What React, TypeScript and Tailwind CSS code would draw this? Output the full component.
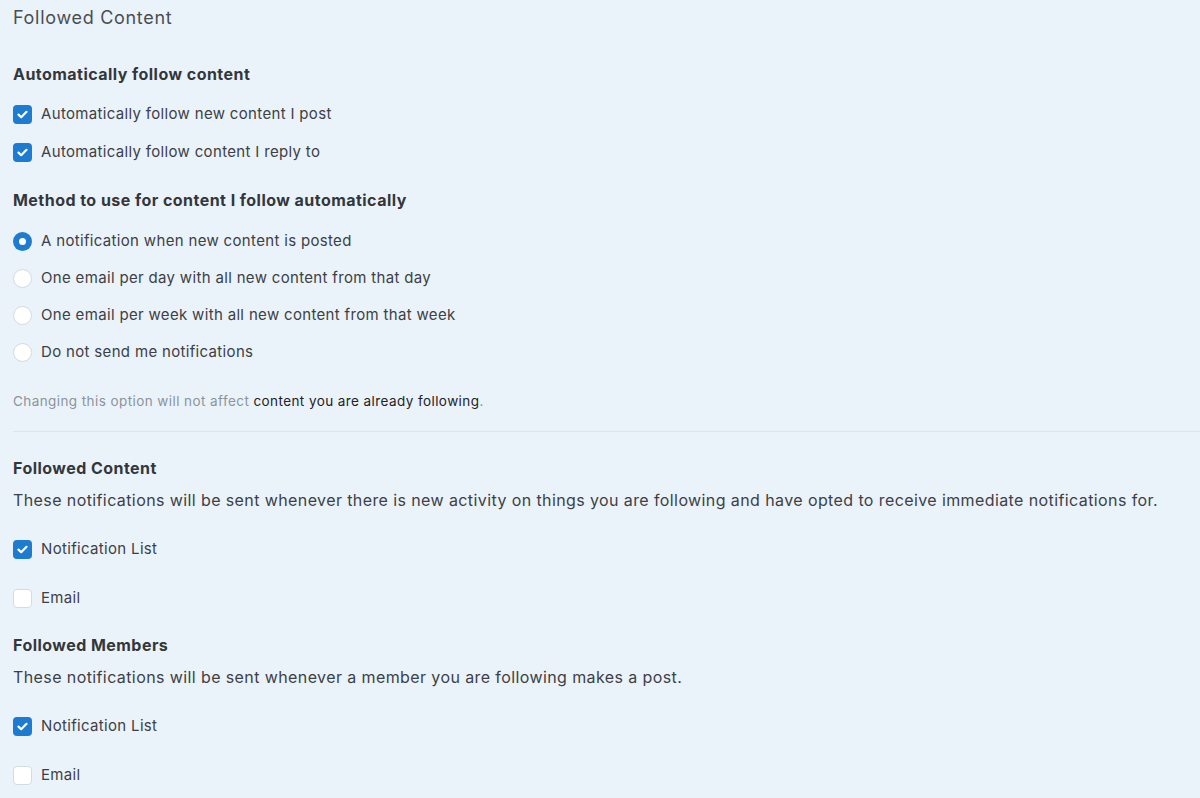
import React from "react";

// 通知設定ページ（フォロー中コンテンツ）
const Check = ({ checked }: { checked: boolean }) =>
  checked ? (
    <span className="flex h-[19px] w-[19px] shrink-0 items-center justify-center rounded-[4px] bg-[#1d7bd0]">
      <svg width="11" height="9" viewBox="0 0 11 9" fill="none">
        <path d="M1.5 4.6 4.2 7.2 9.5 1.8" stroke="#fff" strokeWidth="2.2" strokeLinecap="round" strokeLinejoin="round" />
      </svg>
    </span>
  ) : (
    <span className="h-[19px] w-[19px] shrink-0 rounded-[4px] border border-[#d3dbe3] bg-white" />
  );

const Radio = ({ checked }: { checked: boolean }) =>
  checked ? (
    <span className="flex h-[19px] w-[19px] shrink-0 items-center justify-center rounded-full bg-[#1d7bd0]">
      <span className="h-[7px] w-[7px] rounded-full bg-white" />
    </span>
  ) : (
    <span className="h-[19px] w-[19px] shrink-0 rounded-full border border-[#d3dbe3] bg-white" />
  );

const Row = ({ h, children, label }: { h: string; children: React.ReactNode; label: string }) => (
  <div className={`flex items-center gap-[9px] ${h}`}>
    {children}
    <span className="text-[15px] tracking-[0.33px] text-[#3d4046]">{label}</span>
  </div>
);

export default function App() {
  return (
    <div
      className="min-h-[798px] w-[1200px] bg-[#eaf3f9] pl-[13px] text-[#3b3e44]"
      style={{ fontFamily: "Inter, 'Noto Sans', sans-serif" }}
    >
      <div className="pt-[4px] text-[18px] leading-7 tracking-[0.7px] text-[#4a4d53]">Followed Content</div>

      <div className="mt-[30px] text-[16px] font-bold leading-6 tracking-[0.46px] text-[#33363b]">Automatically follow content</div>
      <div className="mt-[9px]">
        <Row h="h-[38px]" label="Automatically follow new content I post"><Check checked /></Row>
        <Row h="h-[38px]" label="Automatically follow content I reply to"><Check checked /></Row>
      </div>

      <div className="mt-[17px] text-[16px] font-bold leading-6 tracking-[0.46px] text-[#33363b]">Method to use for content I follow automatically</div>
      <div className="mt-[11px]">
        <Row h="h-[37px]" label="A notification when new content is posted"><Radio checked /></Row>
        <Row h="h-[37px]" label="One email per day with all new content from that day"><Radio checked={false} /></Row>
        <Row h="h-[37px]" label="One email per week with all new content from that week"><Radio checked={false} /></Row>
        <Row h="h-[37px]" label="Do not send me notifications"><Radio checked={false} /></Row>
      </div>

      <div className="mt-[20px] text-[13.5px] leading-5 tracking-[0.42px] text-[#8c939c]">
        Changing this option will not affect <span className="text-[#1f2227]">content you are already following</span>.
      </div>

      <div className="mt-[20px] h-px bg-[#dde5ec]" />

      <div className="mt-[24px] text-[16px] font-bold leading-6 tracking-[0.46px] text-[#33363b]">Followed Content</div>
      <div className="mt-[8px] text-[16px] leading-6 tracking-[0.4px] text-[#3d4046]">
        These notifications will be sent whenever there is new activity on things you are following and have opted to receive immediate notifications for.
      </div>
      <div className="mt-[13px]">
        <Row h="h-[49px]" label="Notification List"><Check checked /></Row>
        <Row h="h-[49px]" label="Email"><Check checked={false} /></Row>
      </div>

      <div className="mt-[10px] text-[16px] font-bold leading-6 tracking-[0.46px] text-[#33363b]">Followed Members</div>
      <div className="mt-[8px] text-[16px] leading-6 tracking-[0.4px] text-[#3d4046]">
        These notifications will be sent whenever a member you are following makes a post.
      </div>
      <div className="mt-[13px]">
        <Row h="h-[49px]" label="Notification List"><Check checked /></Row>
        <Row h="h-[49px]" label="Email"><Check checked={false} /></Row>
      </div>
    </div>
  );
}
